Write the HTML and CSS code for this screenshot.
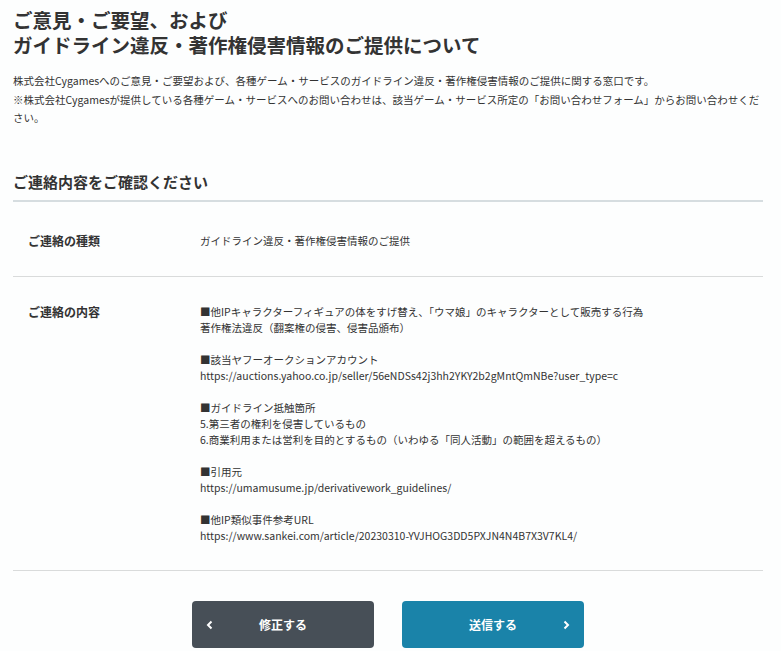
FILE: index.html
```html
<!DOCTYPE html>
<html lang="ja">
<head>
    <meta charset="UTF-8">
    <meta name="viewport" content="width=device-width, initial-scale=1.0">
    <title>ご意見・ご要望 - 確認</title>
    <link rel="stylesheet" href="styles.css">
</head>
<body>
    <div class="container">
        <h1>ご意見・ご要望、および<br>ガイドライン違反・著作権侵害情報のご提供について</h1>

        <p class="lead">株式会社Cygamesへのご意見・ご要望および、各種ゲーム・サービスのガイドライン違反・著作権侵害情報のご提供に関する窓口です。<br>※株式会社Cygamesが提供している各種ゲーム・サービスへのお問い合わせは、該当ゲーム・サービス所定の「お問い合わせフォーム」からお問い合わせください。</p>

        <h2>ご連絡内容をご確認ください</h2>

        <dl class="confirm">
            <div class="confirm-row">
                <dt>ご連絡の種類</dt>
                <dd>ガイドライン違反・著作権侵害情報のご提供</dd>
            </div>
            <div class="confirm-row">
                <dt>ご連絡の内容</dt>
                <dd class="message">■他IPキャラクターフィギュアの体をすげ替え、「ウマ娘」のキャラクターとして販売する行為
著作権法違反（翻案権の侵害、侵害品頒布）

■該当ヤフーオークションアカウント
https://auctions.yahoo.co.jp/seller/56eNDSs42j3hh2YKY2b2gMntQmNBe?user_type=c

■ガイドライン抵触箇所
5.第三者の権利を侵害しているもの
6.商業利用または営利を目的とするもの（いわゆる「同人活動」の範囲を超えるもの）

■引用元
https://umamusume.jp/derivativework_guidelines/

■他IP類似事件参考URL
https://www.sankei.com/article/20230310-YVJHOG3DD5PXJN4N4B7X3V7KL4/</dd>
            </div>
        </dl>

        <div class="buttons">
            <button class="btn btn-back" type="button">
                <svg class="arrow arrow-left" width="10" height="10" viewBox="0 0 10 10"><path d="M6.5 1.5 L3 5 L6.5 8.5" fill="none" stroke="#fff" stroke-width="2"/></svg>
                修正する
            </button>
            <button class="btn btn-send" type="button">
                送信する
                <svg class="arrow arrow-right" width="10" height="10" viewBox="0 0 10 10"><path d="M3.5 1.5 L7 5 L3.5 8.5" fill="none" stroke="#fff" stroke-width="2"/></svg>
            </button>
        </div>
    </div>
</body>
</html>
```

FILE: styles.css
```css
body {
    margin: 0;
    background: #fdfefe;
    color: #333;
    font-family: "Noto Sans CJK JP", "Noto Sans", sans-serif;
}
.container {
    padding: 7px 18px 0 13px;
}
h1 {
    margin: 0;
    font-size: 19.5px;
    line-height: 25px;
    font-weight: bold;
    color: #333;
}
.lead {
    margin: 15px 0 0;
    font-size: 10.5px;
    line-height: 18.5px;
}
h2 {
    margin: 44px 0 0;
    font-size: 15px;
    line-height: 20px;
    font-weight: bold;
    padding-bottom: 8px;
    border-bottom: 2px solid #d6dde0;
}
.confirm {
    margin: 0;
}
.confirm-row {
    display: flex;
    border-bottom: 1px solid #d9dbdb;
}
.confirm-row:first-child {
    padding: 31px 0 27px;
}
.confirm-row:last-child {
    padding: 27px 0 26px;
}
.confirm dt {
    width: 172px;
    padding-left: 15px;
    font-size: 12px;
    line-height: 16px;
    font-weight: bold;
}
.confirm dd {
    margin: 0;
    font-size: 10.5px;
    line-height: 16px;
}
.message {
    white-space: pre-line;
}
.buttons {
    display: flex;
    justify-content: center;
    gap: 28px;
    margin: 30px 0 0;
}
.btn {
    position: relative;
    width: 182px;
    height: 47px;
    border: none;
    border-radius: 4px;
    color: #fff;
    font-family: "Noto Sans CJK JP", sans-serif;
    font-size: 12px;
    font-weight: bold;
}
.btn-back {
    background: #474f57;
}
.btn-send {
    background: #1a83a9;
}
.arrow {
    position: absolute;
    top: 19px;
}
.arrow-left {
    left: 13px;
}
.arrow-right {
    right: 13px;
}
```
